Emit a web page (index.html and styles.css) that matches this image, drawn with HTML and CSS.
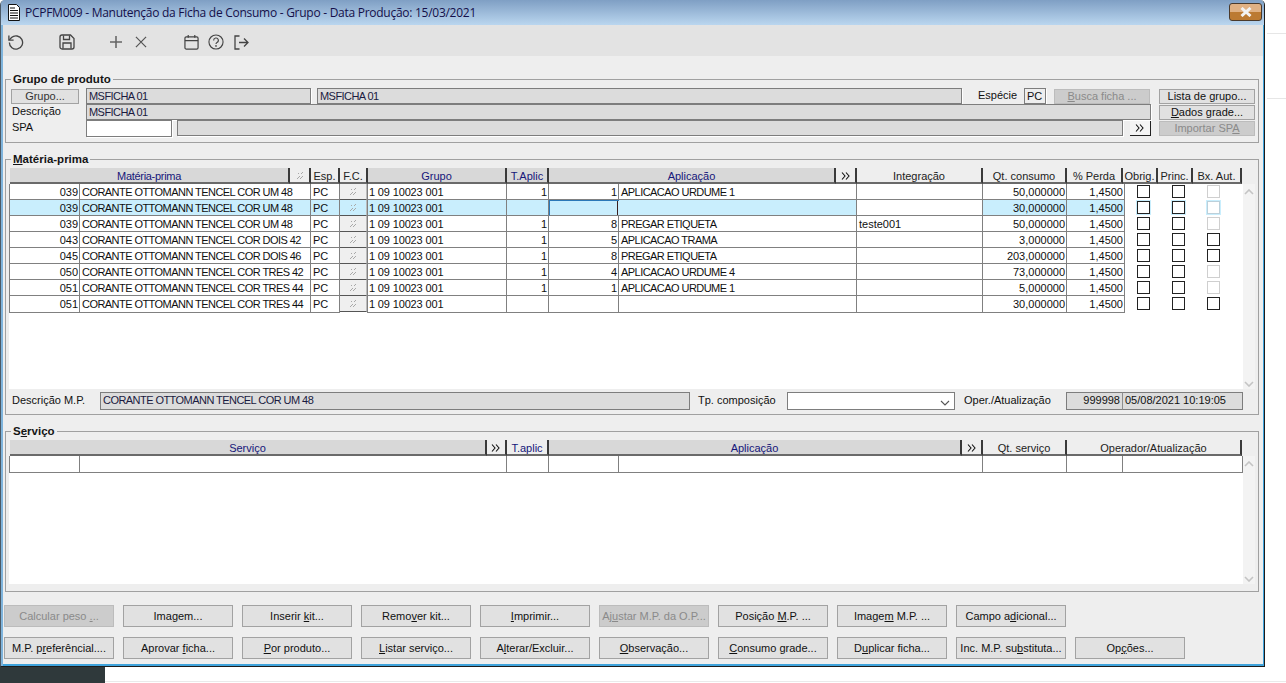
FILE: index.html
```html
<!DOCTYPE html>
<html lang="pt">
<head>
<meta charset="utf-8">
<title>PCPFM009</title>
<link rel="stylesheet" href="styles.css">
</head>
<body>
<svg class="defs" width="0" height="0">
  <symbol id="spark" viewBox="0 0 10 10"><path d="M2 8 5 5M5 8 8 5M6 3 8 1M3 3 4 2" stroke="#a8a8a8" stroke-width="1" fill="none"/></symbol>
  <symbol id="dbl" viewBox="0 0 10 8"><path d="M1 .5 4 4 1 7.5M5 .5 8 4 5 7.5" stroke="#111" stroke-width="1.1" fill="none"/></symbol>
  <symbol id="up" viewBox="0 0 10 6"><path d="M1 5 5 1 9 5" stroke="#c4c4c4" stroke-width="1.6" fill="none"/></symbol>
  <symbol id="down" viewBox="0 0 10 6"><path d="M1 1 5 5 9 1" stroke="#c4c4c4" stroke-width="1.6" fill="none"/></symbol>
</svg>
<div class="top">
<div class="window">
  <header class="titlebar">
    <svg class="docicon" width="14" height="17" viewBox="0 0 14 17"><path d="M1.5 .5H9.5L12.5 3.5V16.5H1.5Z" fill="#fff" stroke="#111"/><path d="M3 4H8M3 6.5H11M3 9H11M3 11.5H11M3 14H11" stroke="#111" stroke-width="1.2"/></svg>
    <span class="title">PCPFM009 - Manutenção da Ficha de Consumo - Grupo - Data Produção: 15/03/2021</span>
    <span class="close"><svg width="16" height="10" viewBox="0 0 16 10"><path d="M3.5 1 12.500 9M12.500 1 3.500 9" stroke="#f2f2f2" stroke-width="3"/></svg></span>
  </header>
  <nav class="toolbar">
    <svg class="ti i-undo" width="17" height="17" viewBox="0 0 18 18"><path d="M2.500 9A7 7 0 1 0 4.800 3.800L2.500 6.200" fill="none" stroke="#444" stroke-width="1.400"/><path d="M2 1.500V6.500H7" fill="none" stroke="#444" stroke-width="1.400"/></svg>
    <svg class="ti i-save" width="16" height="16" viewBox="0 0 16 16"><path d="M1 3A2 2 0 0 1 3 1H11.500L15 4.500V13A2 2 0 0 1 13 15H3A2 2 0 0 1 1 13Z" fill="none" stroke="#444" stroke-width="1.300"/><path d="M4.500 1.500V5.500H10.500V1.500M4 14.500V9H12V14.500" fill="none" stroke="#444" stroke-width="1.300"/></svg>
    <svg class="ti i-plus" width="12" height="12" viewBox="0 0 13 13"><path d="M6.500 0V13M0 6.500H13" stroke="#666" stroke-width="1.700"/></svg>
    <svg class="ti i-x" width="12" height="12" viewBox="0 0 13 13"><path d="M1 1 12 12M12 1 1 12" stroke="#555" stroke-width="1.300"/></svg>
    <svg class="ti i-cal" width="15" height="16" viewBox="0 0 16 16"><rect x="1" y="2.500" width="14" height="13" rx="1.500" fill="none" stroke="#444" stroke-width="1.300"/><path d="M1 6.500H15M4.500 .5V3.500M11.500 .5V3.500" stroke="#444" stroke-width="1.300"/></svg>
    <svg class="ti i-help" width="16" height="16" viewBox="0 0 17 17"><circle cx="8.500" cy="8.500" r="7.500" fill="none" stroke="#444" stroke-width="1.200"/><path d="M6 6.800A2.500 2.500 0 1 1 9.500 9C8.800 9.400 8.500 9.800 8.500 10.700" fill="none" stroke="#444" stroke-width="1.200"/><circle cx="8.500" cy="12.700" r=".9" fill="#444"/></svg>
    <svg class="ti i-exit" width="15" height="15" viewBox="0 0 15 15"><path d="M5.500 1H1V14H5.500M5 7.500H14M10 3.500 14 7.500 10 11.500" fill="none" stroke="#444" stroke-width="1.300"/></svg>
  </nav>
  <main class="content">
    <fieldset class="box box-prod">
      <legend>Grupo de produto</legend>
      <div class="frow frow-a">
        <button class="btn b-grupo">Grupo...</button>
        <div class="fld f-a">MSFICHA 01</div>
        <div class="fld f-b">MSFICHA 01</div>
        <span class="lbl l-esp">Espécie</span>
        <div class="fld f-pc">PC</div>
        <button class="btn off b-busca"><u>B</u>usca ficha ...</button>
        <button class="btn b-side">Lista de grupo...</button>
      </div>
      <div class="frow frow-b">
        <span class="lbl l-left">Descrição</span>
        <div class="fld f-desc">MSFICHA 01</div>
        <button class="btn b-side b-dados"><u>D</u>ados grade...</button>
      </div>
      <div class="frow frow-c">
        <span class="lbl l-left">SPA</span>
        <div class="fld white f-spa"></div>
        <div class="fld f-spa2"></div>
        <button class="dblbtn"><svg width="10" height="8"><use href="#dbl"/></svg></button>
        <button class="btn off b-side b-imp">Importar SP<u>A</u></button>
      </div>
    </fieldset>

    <fieldset class="box box-mp">
      <legend><u>M</u>atéria-prima</legend>
      <div class="gridwrap">
        <div class="head head-mp">
          <div class="hc dark">Matéria-prima</div>
          <div class="hc"><svg width="10" height="10"><use href="#spark"/></svg></div>
          <div class="hc">Esp.</div>
          <div class="hc">F.C.</div>
          <div class="hc dark">Grupo</div>
          <div class="hc dark">T.Aplic</div>
          <div class="hc dark">Aplicação</div>
          <div class="hc"><svg width="10" height="8"><use href="#dbl"/></svg></div>
          <div class="hc">Integração</div>
          <div class="hc">Qt. consumo</div>
          <div class="hc">% Perda</div>
          <div class="hc">Obrig.</div>
          <div class="hc">Princ.</div>
          <div class="hc">Bx. Aut.</div>
        </div>
        <div class="listbody list-mp">
          <div class="rows">
            <div class="row row-mp">
              <div class="c r">039</div><div class="c">CORANTE OTTOMANN TENCEL COR UM 48</div><div class="c">PC</div><div class="c fc"><span class="fcb"><svg width="10" height="10"><use href="#spark"/></svg></span></div><div class="c">1 09 10023 001</div><div class="c r">1</div><div class="c r">1</div><div class="c">APLICACAO URDUME 1</div><div class="c"></div><div class="c r">50,000000</div><div class="c r">1,4500</div>
              <div class="checks"><i class="ck"></i><i class="ck"></i><i class="ck dis"></i></div>
            </div>
            <div class="row row-mp sel">
              <div class="c r">039</div><div class="c">CORANTE OTTOMANN TENCEL COR UM 48</div><div class="c">PC</div><div class="c fc"><span class="fcb"><svg width="10" height="10"><use href="#spark"/></svg></span></div><div class="c">1 09 10023 001</div><div class="c r"></div><div class="c r focus"><span class="caret"></span></div><div class="c"></div><div class="c nosel"></div><div class="c r">30,000000</div><div class="c r">1,4500</div>
              <div class="checks"><i class="ck glow"></i><i class="ck glow"></i><i class="ck dis glow"></i></div>
            </div>
            <div class="row row-mp">
              <div class="c r">039</div><div class="c">CORANTE OTTOMANN TENCEL COR UM 48</div><div class="c">PC</div><div class="c fc"><span class="fcb"><svg width="10" height="10"><use href="#spark"/></svg></span></div><div class="c">1 09 10023 001</div><div class="c r">1</div><div class="c r">8</div><div class="c">PREGAR ETIQUETA</div><div class="c">teste001</div><div class="c r">50,000000</div><div class="c r">1,4500</div>
              <div class="checks"><i class="ck"></i><i class="ck"></i><i class="ck dis"></i></div>
            </div>
            <div class="row row-mp">
              <div class="c r">043</div><div class="c">CORANTE OTTOMANN TENCEL COR DOIS 42</div><div class="c">PC</div><div class="c fc"><span class="fcb"><svg width="10" height="10"><use href="#spark"/></svg></span></div><div class="c">1 09 10023 001</div><div class="c r">1</div><div class="c r">5</div><div class="c">APLICACAO TRAMA</div><div class="c"></div><div class="c r">3,000000</div><div class="c r">1,4500</div>
              <div class="checks"><i class="ck"></i><i class="ck"></i><i class="ck"></i></div>
            </div>
            <div class="row row-mp">
              <div class="c r">045</div><div class="c">CORANTE OTTOMANN TENCEL COR DOIS 46</div><div class="c">PC</div><div class="c fc"><span class="fcb"><svg width="10" height="10"><use href="#spark"/></svg></span></div><div class="c">1 09 10023 001</div><div class="c r">1</div><div class="c r">8</div><div class="c">PREGAR ETIQUETA</div><div class="c"></div><div class="c r">203,000000</div><div class="c r">1,4500</div>
              <div class="checks"><i class="ck"></i><i class="ck"></i><i class="ck"></i></div>
            </div>
            <div class="row row-mp">
              <div class="c r">050</div><div class="c">CORANTE OTTOMANN TENCEL COR TRES 42</div><div class="c">PC</div><div class="c fc"><span class="fcb"><svg width="10" height="10"><use href="#spark"/></svg></span></div><div class="c">1 09 10023 001</div><div class="c r">1</div><div class="c r">4</div><div class="c">APLICACAO URDUME 4</div><div class="c"></div><div class="c r">73,000000</div><div class="c r">1,4500</div>
              <div class="checks"><i class="ck"></i><i class="ck"></i><i class="ck dis"></i></div>
            </div>
            <div class="row row-mp">
              <div class="c r">051</div><div class="c">CORANTE OTTOMANN TENCEL COR TRES 44</div><div class="c">PC</div><div class="c fc"><span class="fcb"><svg width="10" height="10"><use href="#spark"/></svg></span></div><div class="c">1 09 10023 001</div><div class="c r">1</div><div class="c r">1</div><div class="c">APLICACAO URDUME 1</div><div class="c"></div><div class="c r">5,000000</div><div class="c r">1,4500</div>
              <div class="checks"><i class="ck"></i><i class="ck"></i><i class="ck dis"></i></div>
            </div>
            <div class="row row-mp">
              <div class="c r">051</div><div class="c">CORANTE OTTOMANN TENCEL COR TRES 44</div><div class="c">PC</div><div class="c fc"><span class="fcb"><svg width="10" height="10"><use href="#spark"/></svg></span></div><div class="c">1 09 10023 001</div><div class="c r"></div><div class="c r"></div><div class="c"></div><div class="c"></div><div class="c r">30,000000</div><div class="c r">1,4500</div>
              <div class="checks"><i class="ck"></i><i class="ck"></i><i class="ck"></i></div>
            </div>
          </div>
          <div class="scroll"><svg width="10" height="6"><use href="#up"/></svg><svg width="10" height="6"><use href="#down"/></svg></div>
        </div>
      </div>
      <div class="inforow">
        <span class="lbl l-dmp">Descrição M.P.</span>
        <div class="fld2 f-dmp">CORANTE OTTOMANN TENCEL COR UM 48</div>
        <span class="lbl l-tp">Tp. composição</span>
        <div class="combo"><svg width="10" height="6" viewBox="0 0 10 6"><path d="M1 1 5 5 9 1" stroke="#555" stroke-width="1.100" fill="none"/></svg></div>
        <span class="lbl l-op">Oper./Atualização</span>
        <div class="fld2 f-op r">999998</div>
        <div class="fld2 f-dt">05/08/2021 10:19:05</div>
      </div>
    </fieldset>

    <fieldset class="box box-sv">
      <legend>S<u>e</u>rviço</legend>
      <div class="gridwrap">
        <div class="head head-sv">
          <div class="hc dark">Serviço</div>
          <div class="hc"><svg width="10" height="8"><use href="#dbl"/></svg></div>
          <div class="hc lightnav">T.aplic</div>
          <div class="hc dark">Aplicação</div>
          <div class="hc"><svg width="10" height="8"><use href="#dbl"/></svg></div>
          <div class="hc">Qt. serviço</div>
          <div class="hc">Operador/Atualização</div>
        </div>
        <div class="listbody list-sv">
          <div class="rows">
            <div class="row row-sv"><div class="c"></div><div class="c"></div><div class="c"></div><div class="c"></div><div class="c"></div><div class="c"></div><div class="c"></div><div class="c"></div></div>
          </div>
          <div class="scroll"><svg width="10" height="6"><use href="#up"/></svg><svg width="10" height="6"><use href="#down"/></svg></div>
        </div>
      </div>
    </fieldset>

    <div class="actions">
      <div class="actrow">
        <button class="btn act off">Calcular peso <u>.</u>..</button>
        <button class="btn act">Ima<u>g</u>em...</button>
        <button class="btn act">Inserir <u>k</u>it...</button>
        <button class="btn act">Remo<u>v</u>er kit...</button>
        <button class="btn act"><u>I</u>mprimir...</button>
        <button class="btn act off">Aj<u>u</u>star M.P. da O.P...</button>
        <button class="btn act">Posição <u>M</u>.P. ...</button>
        <button class="btn act">Image<u>m</u> M.P. ...</button>
        <button class="btn act">Campo a<u>d</u>icional...</button>
      </div>
      <div class="actrow">
        <button class="btn act">M.P. p<u>r</u>eferêncial....</button>
        <button class="btn act">Aprovar <u>f</u>icha...</button>
        <button class="btn act"><u>P</u>or produto...</button>
        <button class="btn act"><u>L</u>istar serviço...</button>
        <button class="btn act">A<u>l</u>terar/Excluir...</button>
        <button class="btn act"><u>O</u>bservação...</button>
        <button class="btn act"><u>C</u>onsumo grade...</button>
        <button class="btn act">D<u>u</u>plicar ficha...</button>
        <button class="btn act">Inc. M.P. su<u>b</u>stituta...</button>
        <button class="btn act">Op<u>ç</u>ões...</button>
      </div>
    </div>
  </main>
</div>
<aside class="side"><div class="sl sl-1"></div><div class="sl sl-2"></div></aside>
</div>
<footer class="bottom"><div class="darkblock"></div><div class="bottomline"></div></footer>
</body>
</html>
```
FILE: styles.css
```css
* { box-sizing: border-box; }
html, body { margin: 0; padding: 0; }
body {
  width: 1286px; height: 683px; overflow: hidden; background: #fff;
  font: 11px/14px "Liberation Sans", Arial, sans-serif; color: #111;
  display: flex; flex-direction: column;
}
.defs { position: absolute; }
u { text-underline-offset: 1px; }
.top { display: flex; height: 667px; }
.window {
  width: 1265px; height: 667px; background: #eeeeee;
  border: 1px solid #1c1c1c; border-top: 0; border-left-color: #4d5a66;
  box-shadow: inset 2px 0 0 #7fb4dc, inset -1px -2px 0 #3fa3dc;
  border-radius: 5px 5px 0 0;
  display: flex; flex-direction: column; overflow: hidden;
}
.titlebar {
  height: 25px; flex: none; display: flex; align-items: center;
  background: linear-gradient(#7f9fc4, #bad6ef);
  padding: 0 2px 0 6px;
}
.title { font: 12px/16px "Open Sans", sans-serif; color: #14104a; margin-left: 4px; letter-spacing: -.27px; flex: 1; }
.close {
  width: 33px; height: 18px; border: 1px solid #4a3a2c; border-radius: 3px;
  background: linear-gradient(#e0b184 0 50%, #bc7a32 50% 100%);
  display: flex; align-items: center; justify-content: center;
  margin-top: -2px;
}
.toolbar {
  height: 31px; flex: none; background: #e3e3e3; margin: 0 1px 0 2px;
  display: flex; align-items: center; padding: 3px 0 0 3px;
}
.ti { flex: none; }
.i-undo { margin-left: 1px; }
.i-save { margin-left: 35px; }
.i-plus { margin-left: 35px; }
.i-x { margin-left: 13px; }
.i-cal { margin-left: 37px; }
.i-help { margin-left: 9px; }
.i-exit { margin-left: 10px; }

.content { flex: 1; padding: 16px 0 0 4px; }
.box { margin: 0; padding: 0; border: 1px solid #a0a0a0; width: 1254px; display: block; min-width: 0; }
.box legend { font: bold 11.500px/14px "Liberation Sans", sans-serif; padding: 0 2px; margin-left: 5px; color: #151515; }
.box-prod { height: 71px; padding-top: 2px; }
.box-mp { height: 263px; margin-top: 9px; padding-top: 2px; }
.box-sv { height: 168px; margin-top: 9px; padding-top: 2px; }

.frow { display: flex; align-items: flex-start; margin-left: 5px; }
.frow-a { height: 16px; }
.frow-b { height: 16px; }
.frow-c { height: 17px; }
.btn {
  font: 11px/13px "Liberation Sans", sans-serif; color: #111; background: #e1e1e1;
  border: 1px solid #a2a2a2; padding: 0; margin: 0; text-align: center; white-space: nowrap;
}
.btn.off { background: #cccccc; color: #8a8a8a; border-color: #bcbcbc; }
.b-grupo { width: 68px; height: 15px; margin-top: 1px; color: #333; }
.fld {
  background: #dcdcdc; border: 1px solid #7d7d7d; box-shadow: 1px 1px 0 #fff;
  height: 16px; line-height: 14px; padding-left: 2px; color: #1a1a40; white-space: nowrap;
}
.fld.white { background: #fff; }
.f-a { width: 225px; margin-left: 7px; }
.f-b { width: 645px; margin-left: 6px; }
.f-a, .f-b, .f-desc, .f-dmp { letter-spacing: -.55px; }
.l-esp { margin-left: 16px; width: 46px; line-height: 15px; }
.f-pc { width: 22px; background: #eee; color: #111; }
.b-busca { width: 96px; height: 15px; margin: 1px 0 0 8px; }
.b-side { width: 96px; height: 15px; margin: 1px 0 0 9px; }
.l-left { width: 74px; margin-left: 1px; line-height: 15px; }
.f-desc { width: 1065px; }
.b-dados { margin-left: 8px; }
.f-spa { width: 86px; height: 17px; }
.f-spa2 { width: 946px; margin-left: 5px; height: 16px; }
.dblbtn {
  width: 21px; height: 15px; margin: 1px 0 0 7px; padding: 0; background: #f4f4f4;
  border: 0; border-right: 1px solid #222; border-bottom: 1px solid #222;
  display: flex; align-items: center; justify-content: center;
}
.b-imp { margin-left: 8px; }

.gridwrap { margin-left: 3px; }
.head { display: grid; height: 16px; padding-left: 1px; width: 1233px; }
.head-mp { grid-template-columns: 280px 21px 29px 28px 139px 42px 287px 21px 126px 84px 56px 35px 35px 49px; }
.head-sv { grid-template-columns: 477px 20px 42px 413px 21px 84px 175px; }
.hc {
  background: #eeeeee; border-right: 2px solid #3a3a3a; border-bottom: 2px solid #6a6a6a;
  text-align: center; line-height: 14px; color: #222; display: flex; align-items: center; justify-content: center;
  overflow: hidden; white-space: nowrap; padding-top: 2px;
}
.hc.dark { background: #d8d8d8; color: #16167a; }
.head-mp .hc:first-child { letter-spacing: -.3px; }
.hc.lightnav { color: #16167a; }
.listbody { display: flex; }
.list-mp { height: 205px; }
.list-sv { height: 128px; }
.rows { width: 1234px; background: #fff; }
.scroll {
  width: 12px; background: #f3f3f3; display: flex; flex-direction: column;
  justify-content: space-between; align-items: center; padding: 5px 0 2px;
}
.row { display: grid; height: 16px; }
.row-mp { grid-template-columns: 71px 231px 29px 28px 139px 42px 70px 238px 126px 84px 58px 1fr; height: 16px; }
.row-mp:last-child { height: 17px; }
.row-sv { grid-template-columns: 71px 427px 42px 70px 364px 84px 56px 120px; height: 17px; }
.c {
  border-right: 1px solid #808080; border-bottom: 1px solid #808080;
  padding: 0 1px 0 2px; line-height: 16px; white-space: nowrap; overflow: hidden; color: #101010;
}
.c:first-child { border-left: 1px solid #808080; }
.row-mp .c:nth-child(2), .row-mp .c:nth-child(8) { letter-spacing: -.55px; }
.row-mp .c:nth-child(5) { letter-spacing: -.15px; padding-left: 1px; }
.r { text-align: right; }
.sel .c { background: #c9eefd; }
.sel .c.nosel { background: #fff; }
.focus { position: relative; border-top: 1px solid #2b78b8; border-left: 1px solid #2b78b8; border-right: 0; }
.caret { position: absolute; right: 1px; top: 0; bottom: 0; width: 1px; background: #3a2020; }
.c.fc { padding: 0; border-bottom: 0; }
.sel .c.fc { background: #fff; }
.fcb {
  display: flex; align-items: center; justify-content: center; height: 16px;
  background: #efefef; border-right: 1px solid #bbb; border-bottom: 1px solid #555;
}
.sel .fcb { background: #c9eefd; }
.checks { display: flex; gap: 22px; padding-left: 12px; padding-top: 1px; align-items: flex-start; }
.ck { display: block; width: 13px; height: 13px; background: #fff; border: 1px solid #222; }
.ck.dis { border-color: #cfcfcf; }
.ck.glow { box-shadow: 0 0 0 1px #c9eefd; }
.ck.dis.glow { border-color: #bcd0da; }

.inforow { display: flex; align-items: flex-start; margin-top: 3px; height: 18px; }
.lbl { color: #111; white-space: nowrap; }
.l-dmp { margin-left: 6px; width: 88px; line-height: 16px; }
.fld2 {
  background: #dcdcdc; border: 1px solid #7d7d7d; height: 18px; line-height: 15px; padding: 0 2px;
  white-space: nowrap; color: #1a1a40;
}
.f-dmp { width: 590px; }
.l-tp { margin-left: 8px; width: 89px; line-height: 16px; }
.combo { width: 168px; height: 18px; background: #fff; border: 1px solid #7d7d7d; display: flex; align-items: flex-end; justify-content: flex-end; padding: 0 4px 3px 0; }
.l-op { margin-left: 9px; width: 102px; line-height: 16px; }
.f-op { width: 57px; border-right: 1px solid #8e8e8e; color: #111; }
.f-dt { width: 120px; border-left: 0; color: #111; }

.actions { margin: 13px 0 0 -1px; display: flex; flex-direction: column; gap: 10px; }
.actrow { display: flex; gap: 9px; }
.act { width: 110px; height: 22px; flex: none; line-height: 19px; }

.side { flex: 1; display: flex; flex-direction: column; }
.sl { border-top: 1px solid #e6e6e6; margin-left: 2px; }
.sl-1 { margin-top: 33px; }
.sl-2 { margin-top: 64px; }
.bottom { flex: 1; display: flex; }
.darkblock { width: 105px; background: #2f393b; }
.bottomline { flex: 1; border-bottom: 1px solid #eaeaea; margin-bottom: 1px; }
```
